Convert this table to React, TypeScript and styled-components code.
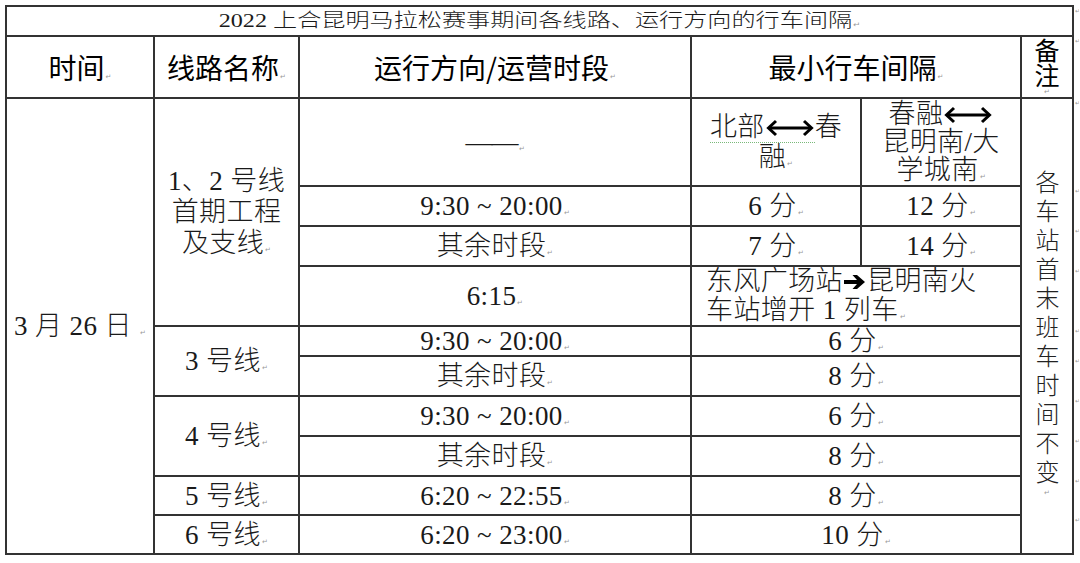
import styled, { createGlobalStyle } from "styled-components";

const GlobalStyle = createGlobalStyle`
  html, body {
    margin: 0;
    padding: 0;
    background: #ffffff;
  }
  body {
    font-family: "Liberation Serif", "Noto Sans CJK SC", serif;
    color: #111;
  }
`;

const Page = styled.div`
  width: 1080px;
  height: 563px;
  box-sizing: border-box;
  padding: 5px 0 0 5px;
  overflow: hidden;
`;

const Table = styled.table`
  border-collapse: collapse;
  table-layout: fixed;
  width: 1074px;
`;

const Col = styled.col<{ $w: number }>`
  width: ${(p) => p.$w}px;
`;

const Row = styled.tr<{ $h: number }>`
  height: ${(p) => p.$h}px;
`;

const Cell = styled.td<{ $align?: string; $valign?: string; $lh?: number }>`
  border: 2px solid #333;
  padding: 0;
  text-align: ${(p) => p.$align ?? "center"};
  vertical-align: ${(p) => p.$valign ?? "middle"};
  font-family: "Liberation Serif", "Noto Sans CJK SC Light", "Noto Sans CJK SC", serif;
  font-weight: 300;
  font-size: 27px;
  line-height: ${(p) => p.$lh ?? 30}px;
  letter-spacing: 0.4px;
  color: #1a1a1a;
  white-space: nowrap;
  overflow: hidden;
`;

const TitleCell = styled(Cell)`
  font-size: 19px;
  line-height: 26px;
  letter-spacing: 0;
`;

const TitleText = styled.span`
  display: inline-block;
  transform: scaleX(1.27);
  transform-origin: center;
`;

const HeadCell = styled(Cell)`
  font-family: "Noto Sans CJK SC", "Liberation Sans", sans-serif;
  font-weight: 400;
  font-size: 28px;
  letter-spacing: 0;
  color: #000;
`;

const NoteHeadText = styled.div`
  writing-mode: vertical-rl;
  text-orientation: upright;
  font-size: 25px;
  line-height: 30px;
  letter-spacing: 0;
  margin: 0 auto;
  max-height: 58px;
`;

const MarkCell = styled.td`
  border: none;
  padding: 0 0 0 1px;
  vertical-align: top;
  font-family: "DejaVu Sans", sans-serif;
  font-size: 6px;
  line-height: 10px;
  color: #999;
  overflow: hidden;
`;

const Pm = styled.span`
  font-family: "DejaVu Sans", sans-serif;
  font-size: 7px;
  line-height: 1;
  color: #999;
  margin-left: 1px;
  letter-spacing: 0;
`;

const Dash = styled.span`
  font-family: "Liberation Serif", serif;
  letter-spacing: -1px;
`;

const Squiggle = styled.span`
  border-bottom: 1px dotted #79b979;
`;

const PadLeft = styled.div`
  padding-left: 14px;
`;

const VerticalNote = styled.div`
  writing-mode: vertical-rl;
  text-orientation: upright;
  font-family: "Noto Sans CJK SC Light", "Noto Sans CJK SC", sans-serif;
  font-weight: 300;
  font-size: 24px;
  letter-spacing: 5px;
  line-height: 30px;
  margin: 14px auto 0;
  color: #222;
`;

const ArrowSvg = styled.svg<{ $w: number }>`
  width: ${(p) => p.$w}px;
  height: 18px;
  vertical-align: -1px;
`;

function DoubleArrow() {
  return (
    <ArrowSvg $w={50} viewBox="0 0 50 18">
      <path d="M4 9 H46" stroke="#000" strokeWidth="3" fill="none" />
      <path d="M11 2 L3.5 9 L11 16" stroke="#000" strokeWidth="3" fill="none" />
      <path d="M39 2 L46.5 9 L39 16" stroke="#000" strokeWidth="3" fill="none" />
    </ArrowSvg>
  );
}

function RightArrow() {
  return (
    <ArrowSvg $w={24} viewBox="0 0 24 18">
      <path d="M1 7 H14 L9.5 2 H14 L22 9 L14 16 H9.5 L14 11 H1 Z" fill="#000" />
    </ArrowSvg>
  );
}

function Mark() {
  return <MarkCell>↵</MarkCell>;
}

export default function App() {
  return (
    <Page>
      <GlobalStyle />
      <Table>
        <colgroup>
          <Col $w={148} />
          <Col $w={145} />
          <Col $w={392} />
          <Col $w={170} />
          <Col $w={160} />
          <Col $w={52} />
          <Col $w={7} />
        </colgroup>
        <tbody>
          <Row $h={30}>
            <TitleCell colSpan={6}>
              <TitleText>
                2022 上合昆明马拉松赛事期间各线路、运行方向的行车间隔<Pm>↵</Pm>
              </TitleText>
            </TitleCell>
            <Mark />
          </Row>
          <Row $h={62}>
            <HeadCell>时间<Pm>↵</Pm></HeadCell>
            <HeadCell>线路名称<Pm>↵</Pm></HeadCell>
            <HeadCell>运行方向/运营时段<Pm>↵</Pm></HeadCell>
            <HeadCell colSpan={2}>最小行车间隔<Pm>↵</Pm></HeadCell>
            <HeadCell>
              <NoteHeadText>备注<Pm>↵</Pm></NoteHeadText>
            </HeadCell>
            <Mark />
          </Row>
          <Row $h={88}>
            <Cell rowSpan={10}>
              3 月 26 日 <Pm>↵</Pm>
            </Cell>
            <Cell rowSpan={4} $lh={31}>
              1、2 号线<br />首期工程<br />及支线<Pm>↵</Pm>
            </Cell>
            <Cell>
              <Dash>——</Dash><Pm>↵</Pm>
            </Cell>
            <Cell>
              <Squiggle>北部<DoubleArrow /></Squiggle>春<br />融<Pm>↵</Pm>
            </Cell>
            <Cell $lh={28}>
              春融<DoubleArrow /><br />昆明南/大<br />学城南<Pm>↵</Pm>
            </Cell>
            <Cell rowSpan={10}>
              <VerticalNote>各车站首末班车时间不变<Pm>↵</Pm></VerticalNote>
            </Cell>
            <Mark />
          </Row>
          <Row $h={40}>
            <Cell>9:30 ~ 20:00<Pm>↵</Pm></Cell>
            <Cell>6 分<Pm>↵</Pm></Cell>
            <Cell>12 分<Pm>↵</Pm></Cell>
            <Mark />
          </Row>
          <Row $h={40}>
            <Cell>其余时段<Pm>↵</Pm></Cell>
            <Cell>7 分<Pm>↵</Pm></Cell>
            <Cell>14 分<Pm>↵</Pm></Cell>
            <Mark />
          </Row>
          <Row $h={60}>
            <Cell>6:15<Pm>↵</Pm></Cell>
            <Cell colSpan={2} $align="left" $valign="top" $lh={29}>
              <PadLeft>
                东风广场站<RightArrow />昆明南火<br />车站增开 1 列车<Pm>↵</Pm>
              </PadLeft>
            </Cell>
            <Mark />
          </Row>
          <Row $h={30}>
            <Cell rowSpan={2}>3 号线<Pm>↵</Pm></Cell>
            <Cell $lh={27}>9:30 ~ 20:00<Pm>↵</Pm></Cell>
            <Cell colSpan={2} $lh={27}>6 分<Pm>↵</Pm></Cell>
            <Mark />
          </Row>
          <Row $h={40}>
            <Cell>其余时段<Pm>↵</Pm></Cell>
            <Cell colSpan={2}>8 分<Pm>↵</Pm></Cell>
            <Mark />
          </Row>
          <Row $h={40}>
            <Cell rowSpan={2}>4 号线<Pm>↵</Pm></Cell>
            <Cell>9:30 ~ 20:00<Pm>↵</Pm></Cell>
            <Cell colSpan={2}>6 分<Pm>↵</Pm></Cell>
            <Mark />
          </Row>
          <Row $h={40}>
            <Cell>其余时段<Pm>↵</Pm></Cell>
            <Cell colSpan={2}>8 分<Pm>↵</Pm></Cell>
            <Mark />
          </Row>
          <Row $h={39}>
            <Cell>5 号线<Pm>↵</Pm></Cell>
            <Cell>6:20 ~ 22:55<Pm>↵</Pm></Cell>
            <Cell colSpan={2}>8 分<Pm>↵</Pm></Cell>
            <Mark />
          </Row>
          <Row $h={39}>
            <Cell>6 号线<Pm>↵</Pm></Cell>
            <Cell>6:20 ~ 23:00<Pm>↵</Pm></Cell>
            <Cell colSpan={2}>10 分<Pm>↵</Pm></Cell>
            <Mark />
          </Row>
        </tbody>
      </Table>
    </Page>
  );
}
